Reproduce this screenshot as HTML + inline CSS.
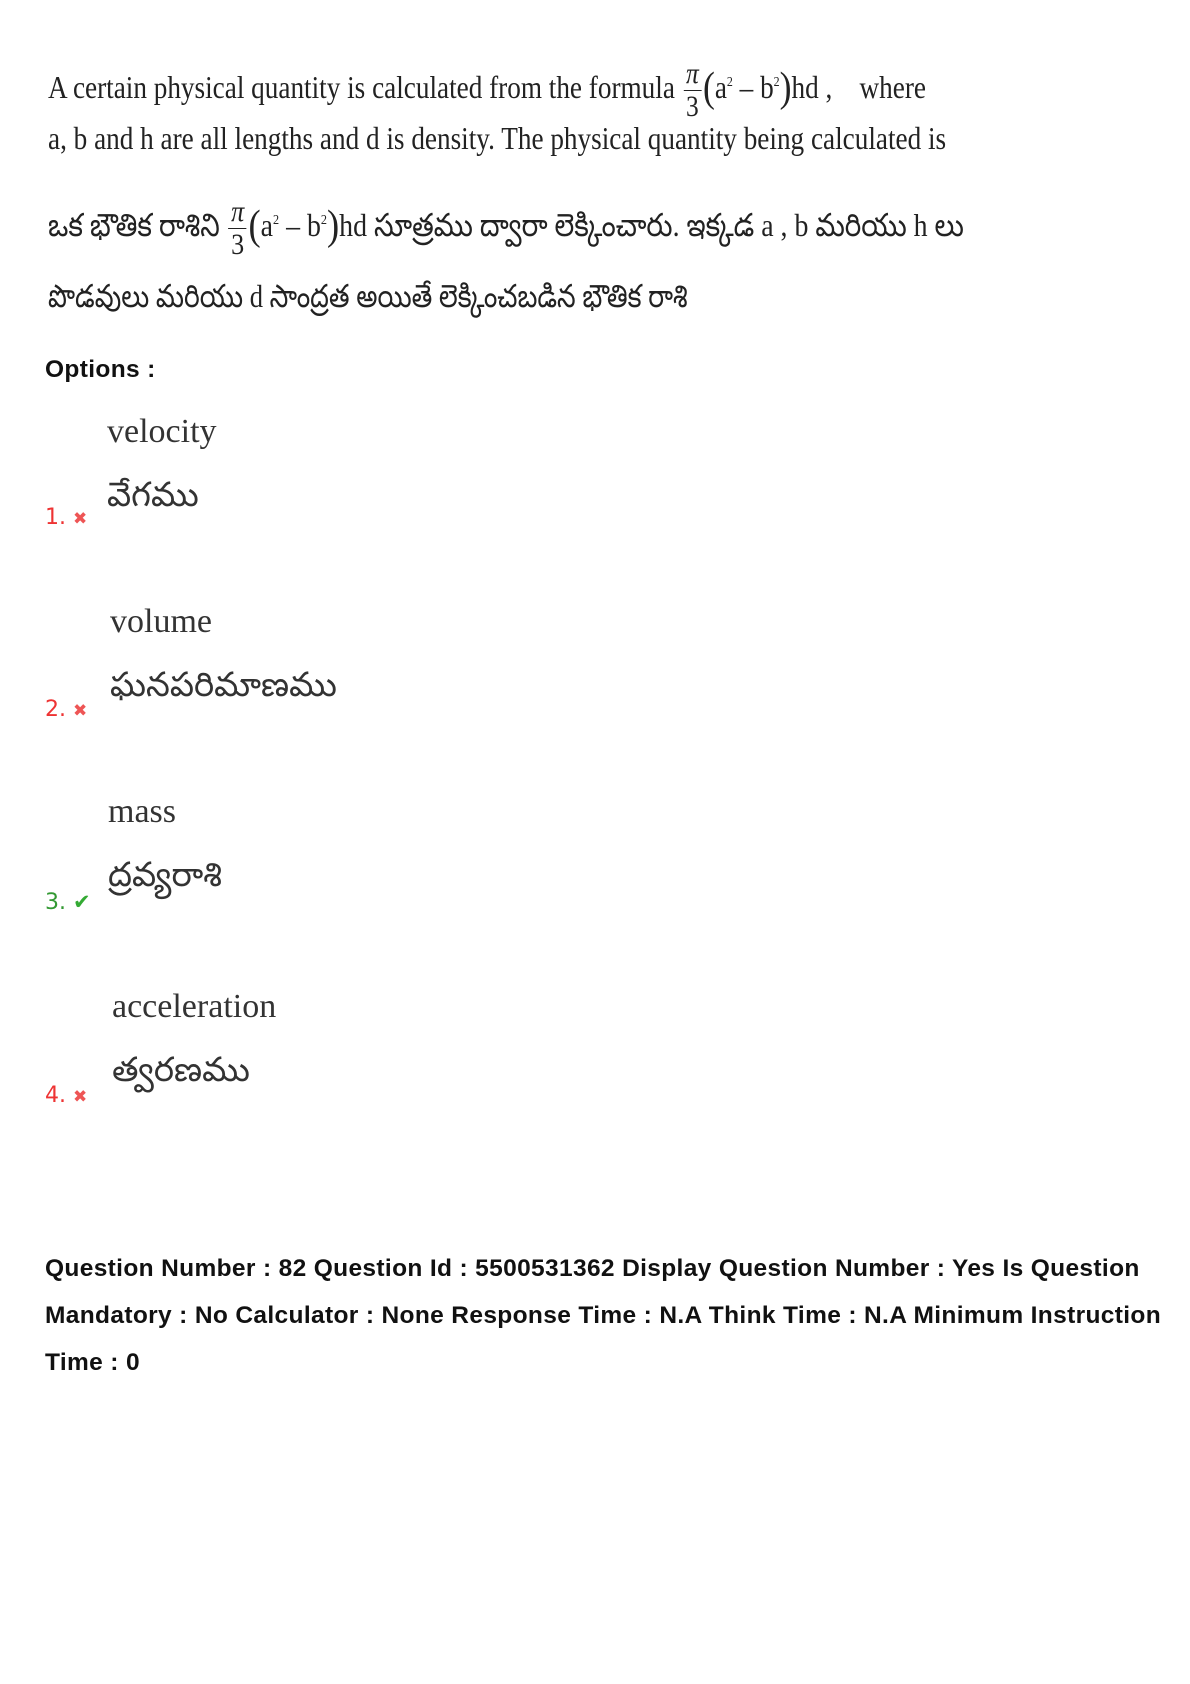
<!DOCTYPE html>
<html><head><meta charset="utf-8"><style>
body{margin:0;width:1190px;height:1684px;background:#fff;position:relative;font-family:"Liberation Sans",sans-serif;}
.a{position:absolute;white-space:nowrap;}
.q{font-family:"Liberation Serif",serif;font-size:32px;color:#222;transform-origin:left top;}
.f{display:inline-block;vertical-align:middle;text-align:center;font-size:30px;line-height:32px;margin:0 2px}
.f span{display:inline-block;border-top:1.5px solid #222;padding:0 3px}
.p{font-size:42px;vertical-align:-3px}
.b{font-family:"Liberation Sans",sans-serif;font-weight:bold;font-size:24.5px;letter-spacing:0.35px;color:#111;}
.o{font-family:"Liberation Serif",serif;font-size:34px;color:#333;}
.t{font-family:"Liberation Serif",serif;font-size:34px;color:#333;}
.n{font-family:"DejaVu Sans",sans-serif;font-size:22px;}
.x{color:#e55;font-size:17px;}
.c{color:#3a3;font-size:21px;}
</style></head><body>
<div class="a q" style="left:48px;top:58px;transform:scaleX(0.85)">A certain physical quantity is calculated from the formula <span class="f"><i>π</i><br><span>3</span></span><span class="p">(</span>a<sup style="font-size:14px">2</sup> – b<sup style="font-size:14px">2</sup><span class="p">)</span>hd ,&nbsp;&nbsp;&nbsp; where</div>
<div class="a q" style="left:48px;top:120px;transform:scaleX(0.85)">a, b and h are all lengths and d is density. The physical quantity being calculated is</div>
<div class="a q" style="left:48px;top:196px;transform:scaleX(0.87)">ఒక భౌతిక రాశిని <span class="f"><i>π</i><br><span>3</span></span><span class="p">(</span>a<sup style="font-size:14px">2</sup> – b<sup style="font-size:14px">2</sup><span class="p">)</span>hd సూత్రము ద్వారా లెక్కించారు. ఇక్కడ a , b మరియు h లు</div>
<div class="a q" style="left:48px;top:278px;transform:scaleX(0.83)">పొడవులు మరియు d సాంద్రత అయితే లెక్కించబడిన భౌతిక రాశి</div>
<div class="a b" style="left:45px;top:356px">Options :</div>

<div class="a o" style="left:107px;top:413px">velocity</div>
<div class="a t" style="left:107px;top:477px">వేగము</div>
<div class="a n" style="left:45px;top:505px;color:#e33">1. <span class="x">✖</span></div>

<div class="a o" style="left:110px;top:603px">volume</div>
<div class="a t" style="left:110px;top:667px">ఘనపరిమాణము</div>
<div class="a n" style="left:45px;top:697px;color:#e33">2. <span class="x">✖</span></div>

<div class="a o" style="left:108px;top:793px">mass</div>
<div class="a t" style="left:108px;top:857px">ద్రవ్యరాశి</div>
<div class="a n" style="left:45px;top:890px;color:#393">3. <span class="c">✔</span></div>

<div class="a o" style="left:112px;top:988px">acceleration</div>
<div class="a t" style="left:112px;top:1052px">త్వరణము</div>
<div class="a n" style="left:45px;top:1083px;color:#e33">4. <span class="x">✖</span></div>

<div class="a b" style="left:45px;top:1245px;line-height:47px;white-space:normal;width:1130px">Question Number : 82 Question Id : 5500531362 Display Question Number : Yes Is Question Mandatory : No Calculator : None Response Time : N.A Think Time : N.A Minimum Instruction Time : 0</div>
</body></html>
